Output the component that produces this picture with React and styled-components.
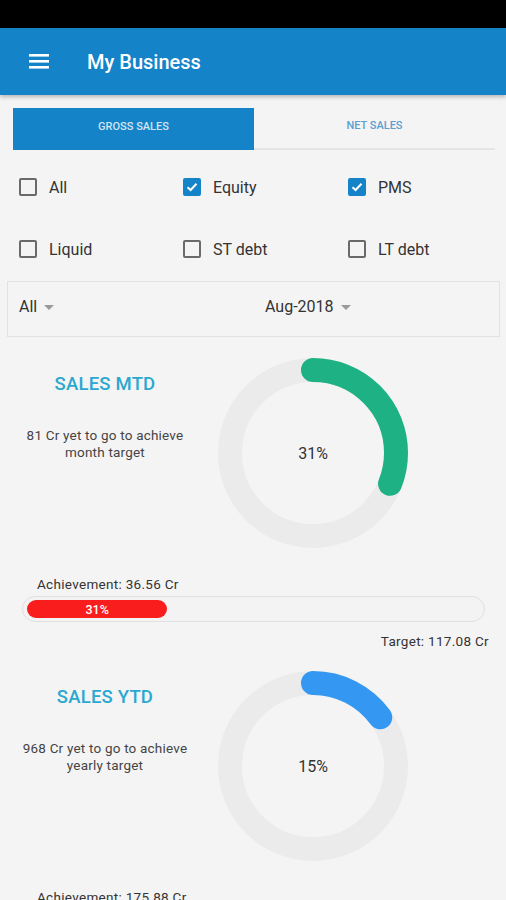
import styled, { createGlobalStyle } from "styled-components";

const GlobalStyle = createGlobalStyle`
  body {
    margin: 0;
    background: #f5f4f5;
    font-family: Roboto, "Liberation Sans", sans-serif;
    overflow: hidden;
  }
`;

const filters = [
  { label: "All", checked: false },
  { label: "Equity", checked: true },
  { label: "PMS", checked: true },
  { label: "Liquid", checked: false },
  { label: "ST debt", checked: false },
  { label: "LT debt", checked: false },
];

const sections = [
  {
    title: "SALES MTD",
    note: ["81 Cr yet to go to achieve", "month target"],
    pct: 31,
    color: "#1db184",
    achievement: "36.56 Cr",
    target: "117.08 Cr",
  },
  {
    title: "SALES YTD",
    note: ["968 Cr yet to go to achieve", "yearly target"],
    pct: 15,
    color: "#3498f2",
    achievement: "175.88 Cr",
    target: "1143.92 Cr",
  },
];

function Donut({ pct, color }) {
  const r = 83;
  const c = 2 * Math.PI * r;
  return (
    <DonutWrap>
      <svg width="196" height="196" viewBox="0 0 196 196">
        <circle cx="98" cy="98" r={r} fill="none" stroke="#ebebeb" strokeWidth="24" />
        <circle
          cx="98"
          cy="98"
          r={r}
          fill="none"
          stroke={color}
          strokeWidth="24"
          strokeLinecap="round"
          strokeDasharray={`${(c * pct) / 100} ${c}`}
          transform="rotate(-90 98 98)"
        />
      </svg>
      <DonutLabel>{pct}%</DonutLabel>
    </DonutWrap>
  );
}

export default function App() {
  return (
    <Page>
      <GlobalStyle />
      <StatusBar />
      <AppBar>
        <svg width="20" height="15" viewBox="0 0 20 15">
          <rect x="0" y="0" width="20" height="2.6" fill="#fff" />
          <rect x="0" y="6" width="20" height="2.6" fill="#fff" />
          <rect x="0" y="12" width="20" height="2.6" fill="#fff" />
        </svg>
        <h1>My Business</h1>
      </AppBar>

      <Tabs>
        <Tab active>GROSS SALES</Tab>
        <Tab>NET SALES</Tab>
      </Tabs>

      <FilterGrid>
        {filters.map((f) => (
          <Check key={f.label}>
            <Box checked={f.checked}>
              {f.checked && (
                <svg width="12" height="10" viewBox="0 0 12 10">
                  <path d="M1.5 5.2 L4.6 8 L10.5 1.8" fill="none" stroke="#fff" strokeWidth="2" />
                </svg>
              )}
            </Box>
            {f.label}
          </Check>
        ))}
      </FilterGrid>

      <SelectBar>
        <Select>All<Caret /></Select>
        <Select>Aug-2018<Caret /></Select>
      </SelectBar>

      {sections.map((s) => (
        <Section key={s.title}>
          <Summary>
            <Info>
              <h2>{s.title}</h2>
              <p>{s.note[0]}<br />{s.note[1]}</p>
            </Info>
            <Donut pct={s.pct} color={s.color} />
          </Summary>
          <Achievement>Achievement: {s.achievement}</Achievement>
          <Bar>
            <Fill style={{ width: `${s.pct}%` }}>{s.pct}%</Fill>
          </Bar>
          <Target>Target: {s.target}</Target>
        </Section>
      ))}
    </Page>
  );
}

const Page = styled.div`
  width: 506px;
  height: 900px;
  overflow: hidden;
`;

const StatusBar = styled.div`
  height: 28px;
  background: #000;
`;

const AppBar = styled.div`
  height: 67px;
  background: #1483c8;
  display: flex;
  align-items: center;
  padding-left: 29px;
  box-shadow: 0 2px 4px rgba(0, 0, 0, 0.25);
  position: relative;
  h1 {
    margin: 0 0 0 38px;
    color: #fff;
    font-size: 20px;
    font-weight: 500;
  }
`;

const Tabs = styled.div`
  display: flex;
  margin: 13px 11px 0 13px;
  border-bottom: 2px solid #e4e4e4;
`;

const Tab = styled.div`
  flex: 1;
  display: flex;
  align-items: center;
  justify-content: center;
  padding-bottom: 5px;
  box-sizing: border-box;
  font-size: 11px;
  font-weight: 500;
  background: ${(p) => (p.active ? "#1483c8" : "transparent")};
  color: ${(p) => (p.active ? "#d3e4f2" : "#5c9fd2")};
  margin-bottom: ${(p) => (p.active ? "-2px" : "0")};
  height: ${(p) => (p.active ? "42px" : "40px")};
`;

const FilterGrid = styled.div`
  display: grid;
  grid-template-columns: 164px 165px 1fr;
  grid-auto-rows: 62px;
  padding: 6px 0 0 19px;
`;

const Check = styled.div`
  display: flex;
  align-items: center;
  gap: 12px;
  font-size: 16px;
  color: #333;
`;

const Box = styled.div`
  width: 18px;
  height: 18px;
  box-sizing: border-box;
  border-radius: 2px;
  border: 2px solid ${(p) => (p.checked ? "#1483c8" : "#6a6a6a")};
  background: ${(p) => (p.checked ? "#1483c8" : "transparent")};
  display: flex;
  align-items: center;
  justify-content: center;
`;

const SelectBar = styled.div`
  margin: 1px 6px 0 7px;
  border: 1px solid #e2e2e2;
  display: grid;
  grid-template-columns: 246px 1fr;
  padding: 14px 0 0 11px;
  box-sizing: border-box;
  height: 56px;
`;

const Select = styled.div`
  display: flex;
  align-items: flex-start;
  font-size: 16px;
  color: #333;
  height: 22px;
  line-height: 22px;
`;

const Caret = styled.span`
  width: 0;
  height: 0;
  margin: 9px 0 0 7px;
  border-left: 5px solid transparent;
  border-right: 5px solid transparent;
  border-top: 5px solid #9a9a9a;
`;

const Section = styled.div`
  padding-top: 22px;
`;

const Summary = styled.div`
  display: flex;
  align-items: flex-start;
`;

const Info = styled.div`
  width: 210px;
  text-align: center;
  padding-top: 14px;
  h2 {
    margin: 0;
    font-size: 18.5px;
    font-weight: 500;
    color: #2aa8cf;
    letter-spacing: 0.2px;
  }
  p {
    margin: 32px 0 0;
    font-size: 13.5px;
    letter-spacing: 0.2px;
    line-height: 17px;
    color: #444;
  }
`;

const DonutWrap = styled.div`
  position: relative;
  width: 196px;
  height: 196px;
  margin-left: 5px;
  margin-top: -4px;
  margin-bottom: 1px;
`;

const DonutLabel = styled.div`
  position: absolute;
  inset: 0;
  display: flex;
  align-items: center;
  justify-content: center;
  font-size: 16px;
  color: #333;
`;

const Achievement = styled.div`
  margin: 24px 0 0 37px;
  font-size: 13.5px;
  letter-spacing: 0.3px;
  color: #333;
  line-height: 17px;
`;

const Bar = styled.div`
  margin: 3px 21px 0 22px;
  height: 26px;
  box-sizing: border-box;
  border: 1px solid #e0e0e0;
  border-radius: 13px;
  background: #f3f3f3;
  padding: 3px 4px;
`;

const Fill = styled.div`
  height: 18px;
  border-radius: 9px;
  background: #fa1d1d;
  color: #fff;
  font-size: 12.5px;
  font-weight: 500;
  display: flex;
  align-items: center;
  justify-content: center;
`;

const Target = styled.div`
  text-align: right;
  margin: 11px 17px 0 0;
  font-size: 13.5px;
  letter-spacing: 0.3px;
  color: #333;
  line-height: 17px;
`;
